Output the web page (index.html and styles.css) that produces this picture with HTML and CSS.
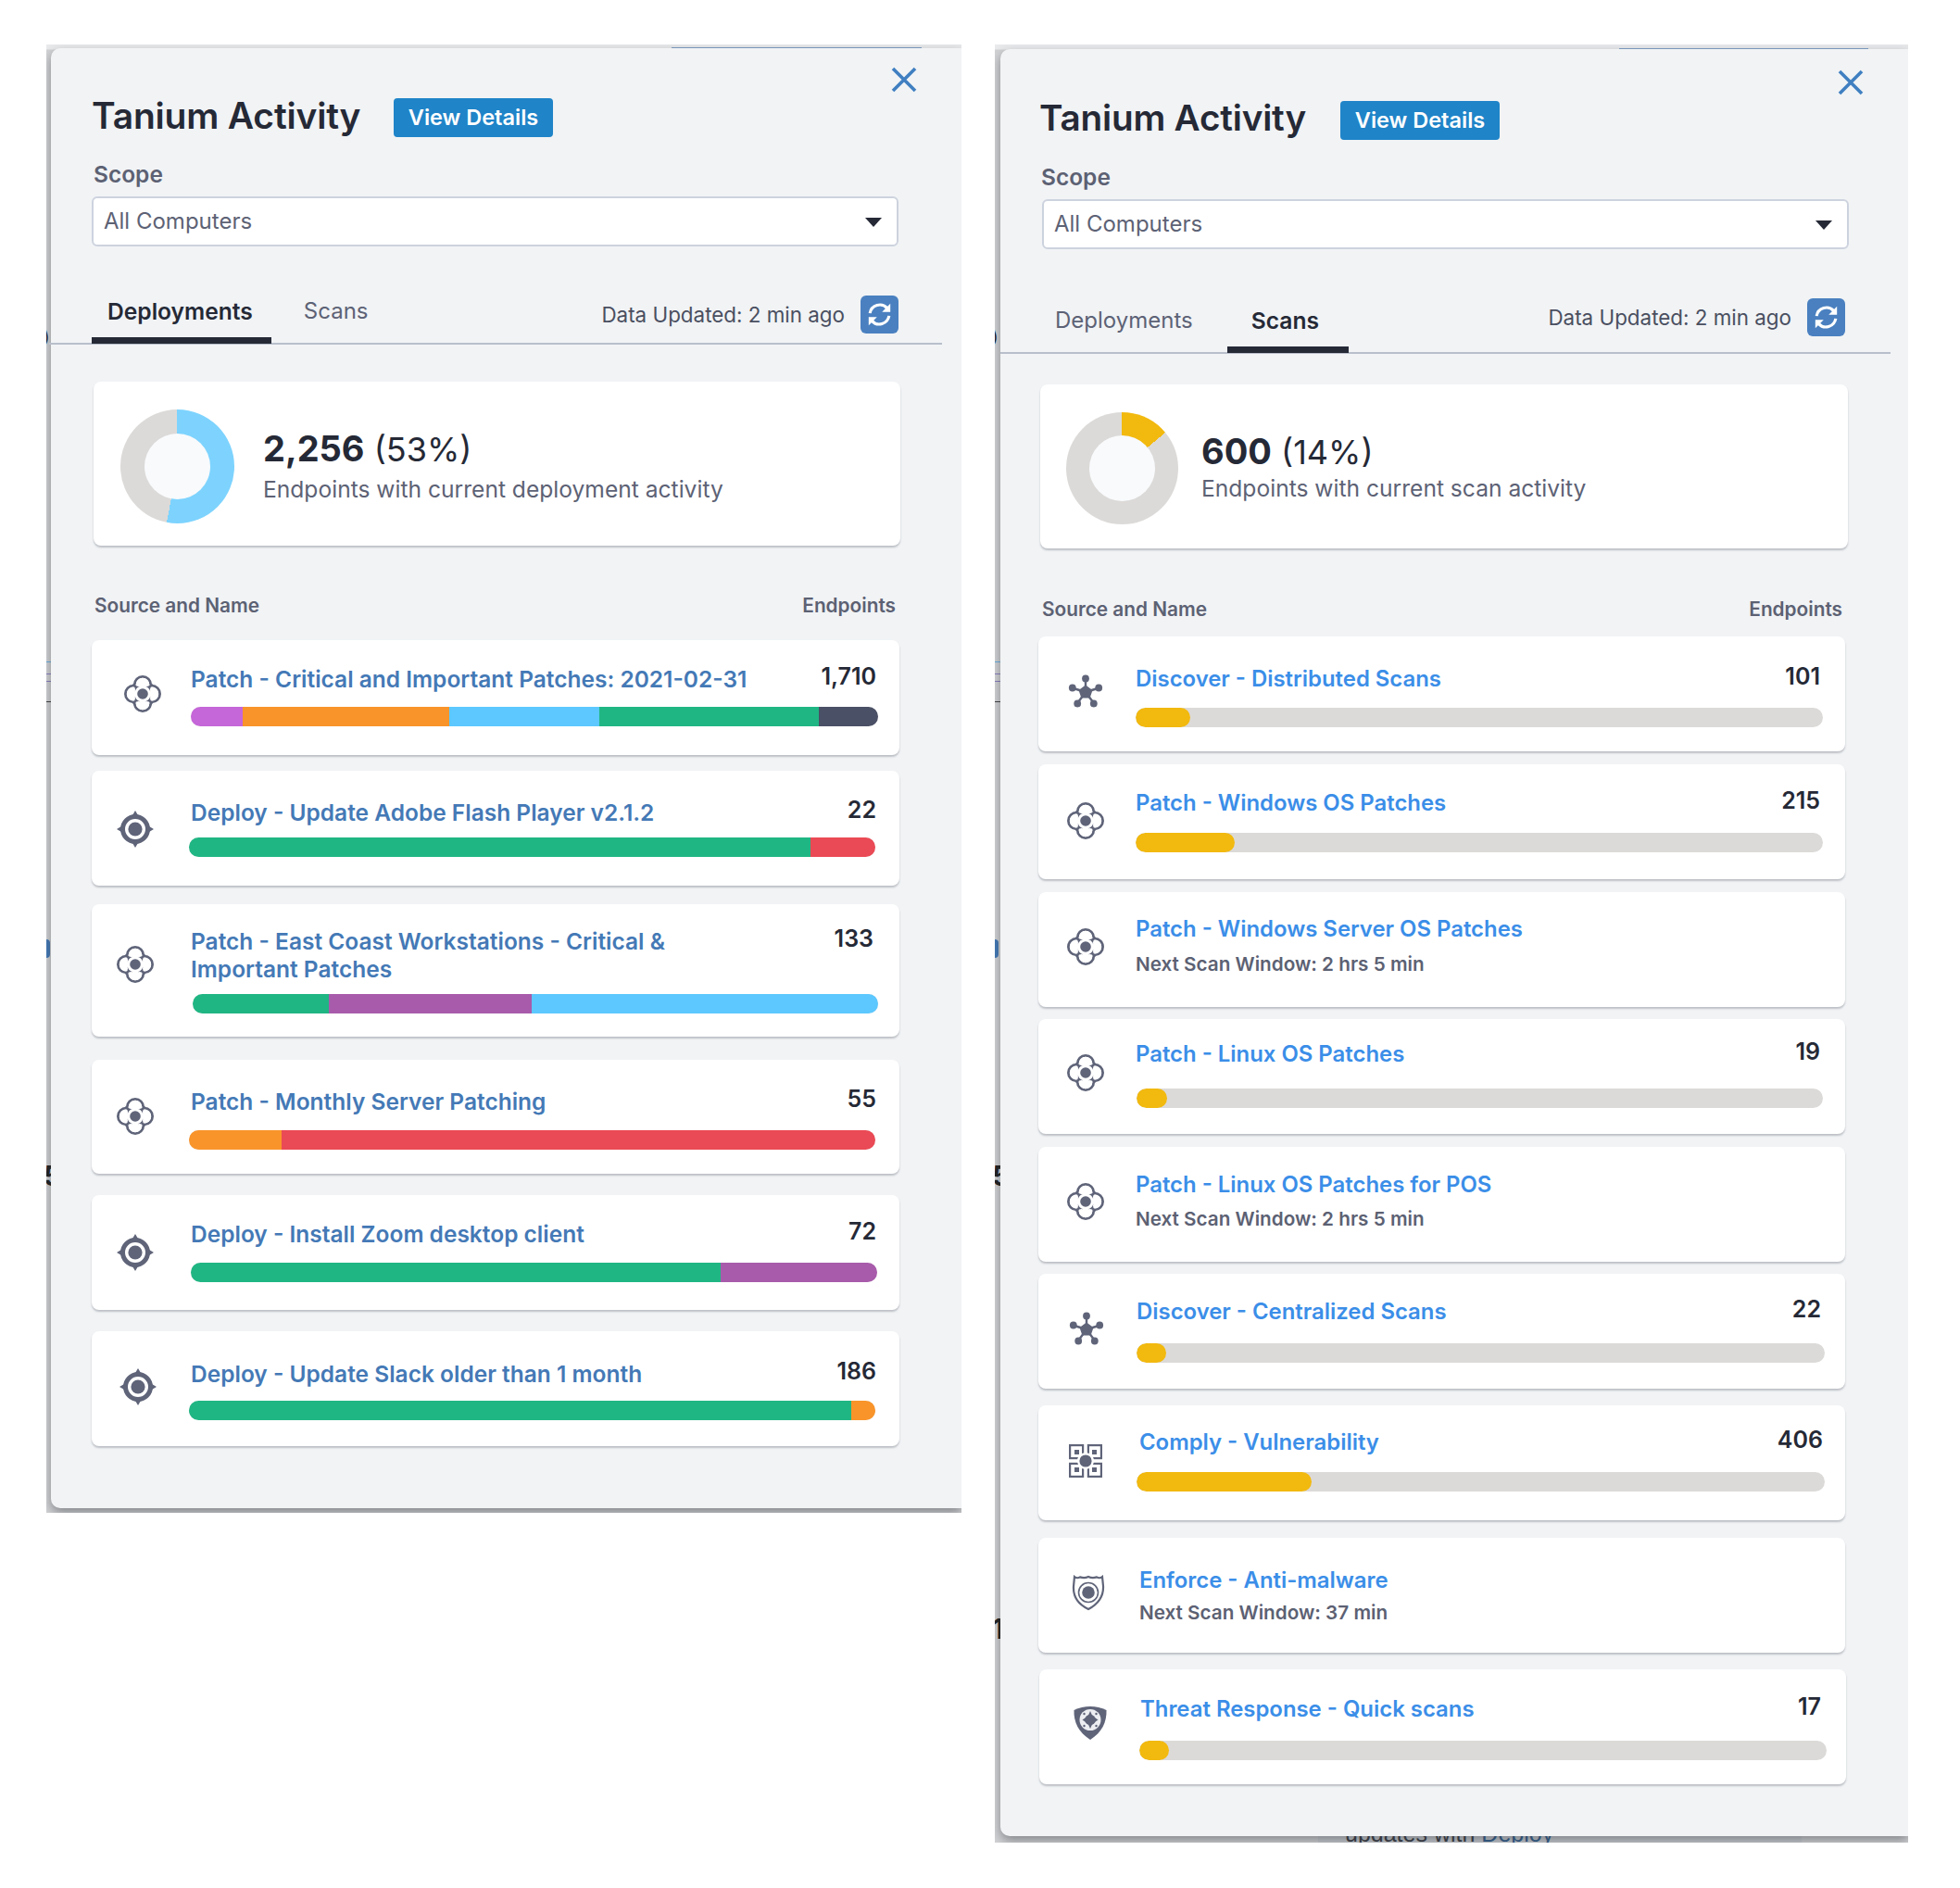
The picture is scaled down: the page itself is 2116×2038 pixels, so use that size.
FILE: index.html
```html
<!DOCTYPE html>
<html lang="en">
<head>
    <meta charset="UTF-8">
    <meta name="viewport" content="width=device-width, initial-scale=1.0">
    <title>Tanium Activity</title>
    <link rel="stylesheet" href="styles.css">
</head>
<body>
<svg class="defs" width="0" height="0">
    <symbol id="i-patch" viewBox="0 0 40 40">
        <g fill="none" stroke="#5f6479" stroke-width="2.800">
            <circle cx="20" cy="10.200" r="8.800"/>
            <circle cx="29.800" cy="20" r="8.800"/>
            <circle cx="20" cy="29.800" r="8.800"/>
            <circle cx="10.200" cy="20" r="8.800"/>
        </g>
        <g fill="#fff">
            <circle cx="20" cy="10.200" r="7.400"/>
            <circle cx="29.800" cy="20" r="7.400"/>
            <circle cx="20" cy="29.800" r="7.400"/>
            <circle cx="10.200" cy="20" r="7.400"/>
        </g>
        <g fill="#5f6479">
            <path d="M8.500 8.500Q13 14 11.700 17.500A8.500 8.500 0 0 1 17.500 11.700Q14 13 8.500 8.500z"/>
            <path transform="rotate(90 20 20)" d="M8.500 8.500Q13 14 11.700 17.500A8.500 8.500 0 0 1 17.500 11.700Q14 13 8.500 8.500z"/>
            <path transform="rotate(180 20 20)" d="M8.500 8.500Q13 14 11.700 17.500A8.500 8.500 0 0 1 17.500 11.700Q14 13 8.500 8.500z"/>
            <path transform="rotate(270 20 20)" d="M8.500 8.500Q13 14 11.700 17.500A8.500 8.500 0 0 1 17.500 11.700Q14 13 8.500 8.500z"/>
        </g>
        <circle cx="20" cy="20" r="5.800" fill="#5f6479"/>
    </symbol>
    <symbol id="i-deploy" viewBox="0 0 40 40">
        <path fill="#5f6479" d="M20 0l3 5h-6zM40 20l-5 3v-6zM20 40l-3-5h6zM0 20l5-3v6z"/>
        <circle cx="20" cy="20" r="13.500" fill="none" stroke="#5f6479" stroke-width="5"/>
        <circle cx="20" cy="20" r="7.600" fill="#5f6479"/>
    </symbol>
    <symbol id="i-discover" viewBox="0 0 40 40">
        <g stroke="#5f6479" stroke-width="2.400">
            <path d="M20 20V5M20 20L35 15.500M20 20l9.500 13M20 20l-9.500 13M20 20L5 15.500"/>
        </g>
        <g fill="#5f6479">
            <path d="M20 12.500l7.500 5.400-2.900 8.600h-9.200l-2.900-8.600z"/>
            <circle cx="20" cy="5.500" r="3.900"/>
            <circle cx="34.200" cy="15.500" r="3.900"/>
            <circle cx="28.800" cy="32.500" r="3.900"/>
            <circle cx="11.200" cy="32.500" r="3.900"/>
            <circle cx="5.800" cy="15.500" r="3.900"/>
        </g>
    </symbol>
    <symbol id="i-comply" viewBox="0 0 36 36">
        <g fill="none" stroke="#5f6479" stroke-width="2.200">
            <rect x="1.100" y="1.100" width="14" height="14"/>
            <rect x="20.900" y="1.100" width="14" height="14"/>
            <rect x="1.100" y="20.900" width="14" height="14"/>
            <rect x="20.900" y="20.900" width="14" height="14"/>
        </g>
        <g fill="#5f6479">
            <rect x="6" y="6" width="5" height="5"/>
            <rect x="25" y="6" width="5" height="5"/>
            <rect x="6" y="25" width="5" height="5"/>
            <rect x="25" y="25" width="5" height="5"/>
        </g>
        <circle cx="18" cy="18" r="9" fill="#fff"/>
        <circle cx="18" cy="18" r="6.600" fill="#5f6479"/>
    </symbol>
    <symbol id="i-enforce" viewBox="0 0 36 40">
        <path fill="none" stroke="#5f6479" stroke-width="2.200" d="M3 2c2 1.600 4 1.600 6 .4 3 1 6 1 9-.4 3 1.400 6 1.400 9 .4 2 1.200 4 1.200 6-.4l1 10c.6 12-6.500 20-16 25C8.500 32.500 1.400 24.500 2 12.500z"/>
        <circle cx="18" cy="19" r="10.500" fill="none" stroke="#5f6479" stroke-width="1.600"/>
        <circle cx="18" cy="19" r="6.800" fill="#5f6479"/>
    </symbol>
    <symbol id="i-threat" viewBox="0 0 36 36">
        <path fill="#5f6479" d="M18 0c6 0 12 1.500 17.500 4 .5 13-5 24-17.500 32C5.500 28 0 17 .5 4 6 1.500 12 0 18 0z"/>
        <circle cx="18" cy="14.500" r="11.500" fill="#eceef1"/>
        <path fill="#5f6479" d="M18 5l2.500 5.500 6 4-6 4-2.500 5.500-2.500-5.500-6-4 6-4z"/>
        <circle cx="18" cy="14.500" r="5.800" fill="#5f6479"/>
        <g fill="#5f6479">
            <circle cx="11.500" cy="8" r="1.200"/>
            <circle cx="24.500" cy="8" r="1.200"/>
            <circle cx="24.500" cy="21" r="1.200"/>
            <circle cx="11.500" cy="21" r="1.200"/>
        </g>
    </symbol>
    <symbol id="i-refresh" viewBox="0 0 24 24">
        <g fill="none" stroke="#fff" stroke-width="2.300">
            <path d="M4.500 11A7.800 7.800 0 0 1 18 7"/>
            <path d="M19.500 13A7.800 7.800 0 0 1 6 17"/>
        </g>
        <path fill="#fff" d="M20.500 3.500v6.500h-6.500zM3.500 20.500v-6.500h6.500z"/>
    </symbol>
    <symbol id="i-close" viewBox="0 0 28 28">
        <path fill="none" stroke="#3f7fc1" stroke-width="3.600" d="M2 2l24 24M26 2L2 26"/>
    </symbol>
</svg>

<div class="page">

    <div class="shot shot-left">
        <span class="edge edge-a">)</span>
        <span class="edge edge-b">5</span>
        <span class="ticks"></span>
        <span class="blip"></span>
        <span class="top-line"></span>
        <section class="panel">
            <a class="close"><svg><use href="#i-close"/></svg></a>
            <div class="head">
                <h1>Tanium Activity</h1>
                <a class="btn">View Details</a>
            </div>
            <label class="scope">Scope</label>
            <div class="select">All Computers</div>
            <div class="tabs">
                <a class="tab active">Deployments</a>
                <a class="tab">Scans</a>
                <div class="updated">
                    <span>Data Updated: 2 min ago</span>
                    <a class="refresh"><svg><use href="#i-refresh"/></svg></a>
                </div>
            </div>
            <div class="summary">
                <div class="donut donut-deploy"></div>
                <div class="summary-text">
                    <div class="stat"><b>2,256</b> (53%)</div>
                    <div class="stat-sub">Endpoints with current deployment activity</div>
                </div>
            </div>
            <div class="list-head"><span>Source and Name</span><span>Endpoints</span></div>
            <div class="list">
                <div class="row">
                    <svg class="icon"><use href="#i-patch"/></svg>
                    <div class="body">
                        <div class="row-top"><a class="name">Patch - Critical and Important Patches: 2021-02-31</a><span class="count">1,710</span></div>
                        <div class="bar">
                            <i class="c-purple" style="width: 7.6%"></i><i class="c-orange" style="width: 30%"></i><i class="c-blue" style="width: 21.9%"></i><i class="c-green" style="width: 31.9%"></i><i class="c-dark" style="width: 8.6%"></i>
                        </div>
                    </div>
                </div>
                <div class="row">
                    <svg class="icon"><use href="#i-deploy"/></svg>
                    <div class="body">
                        <div class="row-top"><a class="name">Deploy - Update Adobe Flash Player v2.1.2</a><span class="count">22</span></div>
                        <div class="bar"><i class="c-green" style="width: 90.5%"></i><i class="c-red" style="width: 9.5%"></i></div>
                    </div>
                </div>
                <div class="row">
                    <svg class="icon"><use href="#i-patch"/></svg>
                    <div class="body">
                        <div class="row-top"><a class="name name-wrap">Patch - East Coast Workstations - Critical &amp; Important Patches</a><span class="count">133</span></div>
                        <div class="bar"><i class="c-green" style="width: 19.9%"></i><i class="c-violet" style="width: 29.6%"></i><i class="c-blue" style="width: 50.5%"></i></div>
                    </div>
                </div>
                <div class="row">
                    <svg class="icon"><use href="#i-patch"/></svg>
                    <div class="body">
                        <div class="row-top"><a class="name">Patch - Monthly Server Patching</a><span class="count">55</span></div>
                        <div class="bar"><i class="c-orange" style="width: 13.5%"></i><i class="c-red" style="width: 86.5%"></i></div>
                    </div>
                </div>
                <div class="row">
                    <svg class="icon"><use href="#i-deploy"/></svg>
                    <div class="body">
                        <div class="row-top"><a class="name">Deploy - Install Zoom desktop client</a><span class="count">72</span></div>
                        <div class="bar"><i class="c-green" style="width: 77.2%"></i><i class="c-violet" style="width: 22.8%"></i></div>
                    </div>
                </div>
                <div class="row">
                    <svg class="icon"><use href="#i-deploy"/></svg>
                    <div class="body">
                        <div class="row-top"><a class="name">Deploy - Update Slack older than 1 month</a><span class="count">186</span></div>
                        <div class="bar"><i class="c-green" style="width: 96.5%"></i><i class="c-orange" style="width: 3.5%"></i></div>
                    </div>
                </div>
            </div>
        </section>
    </div>

    <div class="shot shot-right">
        <span class="edge edge-a">)</span>
        <span class="edge edge-b">5</span>
        <span class="edge edge-c">1</span>
        <span class="ticks"></span>
        <span class="blip"></span>
        <span class="top-line"></span>
        <div class="ghost">updates with <span>Deploy</span></div>
        <section class="panel">
            <a class="close"><svg><use href="#i-close"/></svg></a>
            <div class="head">
                <h1>Tanium Activity</h1>
                <a class="btn">View Details</a>
            </div>
            <label class="scope">Scope</label>
            <div class="select">All Computers</div>
            <div class="tabs">
                <a class="tab">Deployments</a>
                <a class="tab active">Scans</a>
                <div class="updated">
                    <span>Data Updated: 2 min ago</span>
                    <a class="refresh"><svg><use href="#i-refresh"/></svg></a>
                </div>
            </div>
            <div class="summary">
                <div class="donut donut-scan"></div>
                <div class="summary-text">
                    <div class="stat"><b>600</b> (14%)</div>
                    <div class="stat-sub">Endpoints with current scan activity</div>
                </div>
            </div>
            <div class="list-head"><span>Source and Name</span><span>Endpoints</span></div>
            <div class="list">
                <div class="row">
                    <svg class="icon"><use href="#i-discover"/></svg>
                    <div class="body">
                        <div class="row-top"><a class="name">Discover - Distributed Scans</a><span class="count">101</span></div>
                        <div class="bar"><i class="c-yellow" style="width: 7.9%"></i></div>
                    </div>
                </div>
                <div class="row">
                    <svg class="icon"><use href="#i-patch"/></svg>
                    <div class="body">
                        <div class="row-top"><a class="name">Patch - Windows OS Patches</a><span class="count">215</span></div>
                        <div class="bar"><i class="c-yellow" style="width: 14.4%"></i></div>
                    </div>
                </div>
                <div class="row">
                    <svg class="icon"><use href="#i-patch"/></svg>
                    <div class="body">
                        <div class="row-top"><a class="name">Patch - Windows Server OS Patches</a></div>
                        <div class="next">Next Scan Window: 2 hrs 5 min</div>
                    </div>
                </div>
                <div class="row">
                    <svg class="icon"><use href="#i-patch"/></svg>
                    <div class="body">
                        <div class="row-top"><a class="name">Patch - Linux OS Patches</a><span class="count">19</span></div>
                        <div class="bar"><i class="c-yellow" style="width: 4.5%"></i></div>
                    </div>
                </div>
                <div class="row">
                    <svg class="icon"><use href="#i-patch"/></svg>
                    <div class="body">
                        <div class="row-top"><a class="name">Patch - Linux OS Patches for POS</a></div>
                        <div class="next">Next Scan Window: 2 hrs 5 min</div>
                    </div>
                </div>
                <div class="row">
                    <svg class="icon"><use href="#i-discover"/></svg>
                    <div class="body">
                        <div class="row-top"><a class="name">Discover - Centralized Scans</a><span class="count">22</span></div>
                        <div class="bar"><i class="c-yellow" style="width: 4.3%"></i></div>
                    </div>
                </div>
                <div class="row">
                    <svg class="icon icon-sm"><use href="#i-comply"/></svg>
                    <div class="body">
                        <div class="row-top"><a class="name">Comply - Vulnerability</a><span class="count">406</span></div>
                        <div class="bar"><i class="c-yellow" style="width: 25.4%"></i></div>
                    </div>
                </div>
                <div class="row">
                    <svg class="icon icon-tall"><use href="#i-enforce"/></svg>
                    <div class="body">
                        <div class="row-top"><a class="name">Enforce - Anti-malware</a></div>
                        <div class="next">Next Scan Window: 37 min</div>
                    </div>
                </div>
                <div class="row">
                    <svg class="icon icon-sm"><use href="#i-threat"/></svg>
                    <div class="body">
                        <div class="row-top"><a class="name">Threat Response - Quick scans</a><span class="count">17</span></div>
                        <div class="bar"><i class="c-yellow" style="width: 4.3%"></i></div>
                    </div>
                </div>
            </div>
        </section>
    </div>

</div>
</body>
</html>
```

FILE: styles.css
```css
* {
    box-sizing: border-box;
}

body {
    margin: 0;
    background-color: #fff;
    font-family: Inter, "Liberation Sans", sans-serif;
    color: #252936;
}

.defs {
    position: absolute;
}

.page {
    display: flex;
    align-items: flex-start;
    gap: 36px;
    padding: 48px 0 0 50px;
    height: 2038px;
}

/* the two cut-outs, each with a bit of the page behind the panel showing */
.shot {
    position: relative;
    overflow: hidden;
    background: linear-gradient(#e9eaec 5px, #d2d3d5 6px);
}

.shot-left {
    width: 988px;
    height: 1585px;
}

.shot-right {
    width: 986px;
    height: 1941px;
}

.edge {
    position: absolute;
    left: -3px;
    font-size: 30px;
    font-weight: 700;
    color: #222;
}

.edge-a {
    top: 305px;
    font-size: 18px;
    font-weight: 400;
}

.edge-b {
    top: 1203px;
}

.edge-c {
    top: 1692px;
}

.ticks {
    position: absolute;
    left: 0;
    top: 666px;
    width: 7px;
    height: 1px;
    background-color: #6bb0e0;
    box-shadow: 0 13px #8a7fc0, 0 21px #8a7fc0, 0 43px #444;
}

.blip {
    position: absolute;
    left: 0;
    top: 966px;
    width: 4px;
    height: 20px;
    background-color: #4479b6;
    border-radius: 0 4px 4px 0;
}

.top-line {
    position: absolute;
    top: 3px;
    height: 2px;
    background-color: #7f9fc6;
}

.shot-left .top-line {
    left: 675px;
    width: 270px;
}

.shot-right .top-line {
    left: 674px;
    width: 269px;
    top: 4px;
}

.ghost {
    position: absolute;
    left: 349px;
    bottom: -5px;
    width: 522px;
    padding-left: 29px;
    font-family: "Liberation Sans", sans-serif;
    font-size: 25px;
    line-height: 30px;
    background-color: #c9ccd1;
    color: #3c3f47;
}

.ghost span {
    color: #34608f;
}

.panel {
    position: relative;
    background-color: #f1f3f5;
    border-radius: 10px 0 0 10px;
    box-shadow: 0 5px 12px rgba(40, 44, 52, 0.45);
}

.shot-left .panel {
    margin: 4px 0 0 5px;
    height: 1576px;
    padding: 54px 0 0 45px;
}

.shot-right .panel {
    margin: 5px 0 0 6px;
    height: 1929px;
    padding: 56px 0 0 43px;
}

.close {
    position: absolute;
    top: 20px;
    right: 48px;
    width: 28px;
    height: 28px;
}

.shot-right .close {
    top: 22px;
}

.close svg,
.refresh svg {
    display: block;
    width: 100%;
    height: 100%;
}

.head {
    display: flex;
    align-items: center;
    height: 42px;
    margin-bottom: 25px;
}

h1 {
    margin: -6px 38px 0 -1px;
    width: 288px;
    font-size: 39px;
    font-weight: 600;
    letter-spacing: -0.2px;
    white-space: nowrap;
}

.shot-right h1 {
    margin-right: 37px;
    font-size: 38.7px;
}

.btn {
    display: block;
    width: 172px;
    height: 42px;
    line-height: 42px;
    text-align: center;
    background-color: #1f84c8;
    color: #fff;
    font-size: 23.5px;
    font-weight: 600;
    border-radius: 4px;
}

.scope {
    display: block;
    height: 30px;
    padding-left: 1px;
    line-height: 30px;
    font-size: 24.5px;
    font-weight: 600;
    color: #5c6173;
}

.select {
    position: relative;
    width: 871px;
    height: 54px;
    margin-top: 9px;
    padding-left: 11px;
    line-height: 50px;
    font-size: 24px;
    color: #5d6275;
    background-color: #fff;
    border: 2px solid #cdd3de;
    border-radius: 6px;
}

.select::after {
    content: "";
    position: absolute;
    right: 16px;
    top: 21px;
    border-left: 9px solid transparent;
    border-right: 9px solid transparent;
    border-top: 10px solid #252936;
}

.shot-left .select {
    margin-left: -1px;
}

.shot-right .select {
    margin-left: 2px;
}

.tabs {
    display: flex;
    margin-top: 53px;
    border-bottom: 2px solid #b9bfcb;
}

.shot-left .tabs {
    width: 964px;
    height: 53px;
    margin-left: -47px;
    padding-left: 46px;
}

.shot-right .tabs {
    width: 961px;
    height: 60px;
    margin-left: -43px;
}

.tab {
    line-height: 30px;
    font-size: 24px;
    color: #5d6275;
    white-space: nowrap;
}

.tab.active {
    font-size: 24.6px;
    font-weight: 600;
    color: #252936;
    border-bottom: 7px solid #252936;
    margin-bottom: -1px;
}

.shot-left .tab {
    padding: 2px 20px 0 17px;
}

.shot-left .tab + .tab {
    margin-left: 18px;
}

.shot-right .tab {
    padding: 9px 32px 0 26px;
}

.shot-right .tab:first-child {
    padding: 9px 0 0 59px;
}

.shot-right .tab + .tab {
    margin-left: 37px;
}

.updated {
    display: flex;
    align-items: center;
    gap: 17px;
    height: 41px;
    margin-left: auto;
    margin-right: 47px;
    font-size: 22.4px;
    color: #4a4f60;
    white-space: nowrap;
}

.shot-right .updated {
    margin-right: 49px;
}

.refresh {
    width: 41px;
    height: 41px;
    padding: 4px;
    background-color: #4a80c0;
    border-radius: 6px;
}

.summary {
    display: flex;
    width: 871px;
    height: 177px;
    padding: 30px 0 0 29px;
    background-color: #fff;
    border-radius: 8px;
    box-shadow: 0 2px 2px rgba(70, 76, 90, 0.3);
}

.shot-left .summary {
    margin: 40px 0 0 1px;
}

.shot-right .summary {
    width: 872px;
    margin: 33px 0 0 0;
    padding-left: 28px;
}

.donut {
    position: relative;
    flex: none;
    width: 123px;
    height: 123px;
    border-radius: 50%;
}

.donut::after {
    content: "";
    position: absolute;
    top: 26px;
    left: 26px;
    width: 71px;
    height: 71px;
    border-radius: 50%;
    background-color: #f8fafc;
}

.donut-deploy {
    background: conic-gradient(#7dd3fe 0 53%, #dcdad8 53% 100%);
}

.donut-scan {
    width: 121px;
    height: 121px;
    background: conic-gradient(#f2b90f 0 14%, #dcdad8 14% 100%);
}

.donut-scan::after {
    top: 25px;
    left: 25px;
}

.summary-text {
    margin: 22px 0 0 31px;
}

.shot-right .summary-text {
    margin-left: 25px;
}

.stat {
    line-height: 40px;
    font-size: 36px;
}

.stat b {
    font-size: 38px;
    font-weight: 700;
}

.stat-sub {
    margin-top: 8px;
    line-height: 30px;
    font-size: 24.6px;
    color: #5d6275;
}

.shot-right .stat-sub {
    margin-top: 4px;
}

.list-head {
    display: flex;
    justify-content: space-between;
    line-height: 30px;
    font-size: 20.8px;
    font-weight: 600;
    color: #5c6173;
}

.shot-left .list-head {
    width: 865px;
    margin: 50px 0 0 2px;
}

.shot-right .list-head {
    width: 864px;
    margin: 51px 0 0 2px;
}

.list {
    display: flex;
    flex-direction: column;
}

.shot-left .list {
    margin-left: -1px;
}

.shot-right .list {
    margin-left: -2px;
}

.row {
    display: flex;
    flex: none;
    width: 872px;
    height: 124px;
    padding: 0 1px;
    margin-top: var(--mt);
    margin-left: var(--ml, 0);
    background-color: #fff;
    border-radius: 8px;
    box-shadow: 0 2px 2px rgba(70, 76, 90, 0.3);
}

.shot-right .row {
    width: 871px;
    padding: 0;
}

.icon {
    flex: none;
    width: 40px;
    height: 40px;
    margin: var(--iy) 0 0 var(--ix);
}

.icon-sm {
    width: 36px;
    height: 36px;
}

.icon-tall {
    width: 36px;
}

.body {
    flex: 1;
    min-width: 0;
    margin-left: var(--bx);
    padding: var(--pt) 24px 0 0;
}

.shot-right .body {
    padding-right: 25px;
}

.row-top {
    display: flex;
    justify-content: space-between;
    margin-right: var(--cr, 0);
}

.shot-right .row-top {
    margin-right: var(--cr, 2px);
}

.name {
    font-size: 24.5px;
    font-weight: 600;
    line-height: 30px;
    white-space: nowrap;
}

.name-wrap {
    width: 560px;
    white-space: normal;
}

.shot-left .name {
    color: #4479b6;
}

.shot-right .name {
    font-size: 23.9px;
    color: #3b8ee8;
}

.count {
    margin-top: -3px;
    line-height: 30px;
    font-size: 25px;
    font-weight: 600;
    color: #252936;
}

.next {
    margin-top: var(--nm, 8px);
    line-height: 30px;
    font-size: 20.7px;
    font-weight: 600;
    color: #5c6173;
}

.bar {
    display: flex;
    height: 21px;
    margin: var(--gap) var(--br, 0) 0 var(--bl, 0);
    overflow: hidden;
    border-radius: 11px;
    background-color: #dcdad8;
}

.bar i {
    display: block;
    height: 100%;
}

.bar .c-yellow {
    border-radius: 11px;
}

.c-purple { background-color: #c566d9; }
.c-orange { background-color: #f9942a; }
.c-blue { background-color: #5cc8ff; }
.c-green { background-color: #20b684; }
.c-dark { background-color: #4a5065; }
.c-red { background-color: #ea4a55; }
.c-violet { background-color: #a85bab; }
.c-yellow { background-color: #f2b90f; }

/* the rows sit a few pixels differently in each mock, so nudged one by one */
.shot-left .row:nth-child(1) { --mt: 22px; --ix: 34px; --iy: 38px; --bx: 32px; --pt: 27px; --gap: 15px; --br: -2px; }
.shot-left .row:nth-child(2) { --mt: 17px; --ix: 26px; --iy: 43px; --bx: 40px; --pt: 30px; --gap: 12px; --bl: -2px; --br: 1px; }
.shot-left .row:nth-child(3) { --mt: 20px; --ix: 26px; --iy: 45px; --bx: 40px; --pt: 25px; --gap: 12px; --bl: 2px; --br: -2px; --cr: 3px; height: 143px; }
.shot-left .row:nth-child(4) { --mt: 25px; --ix: 26px; --iy: 41px; --bx: 40px; --pt: 30px; --gap: 16px; --bl: -2px; --br: 1px; height: 123px; }
.shot-left .row:nth-child(5) { --mt: 23px; --ix: 26px; --iy: 42px; --bx: 40px; --pt: 27px; --gap: 16px; --br: -1px; }
.shot-left .row:nth-child(6) { --mt: 23px; --ix: 29px; --iy: 40px; --bx: 37px; --pt: 31px; --gap: 14px; --bl: -2px; --br: 1px; }

.shot-right .row:nth-child(1) { --mt: 14px; --ix: 31px; --iy: 40px; --bx: 34px; --pt: 31px; --gap: 16px; --br: -1px; }
.shot-right .row:nth-child(2) { --mt: 14px; --ix: 31px; --iy: 41px; --bx: 34px; --pt: 27px; --gap: 17px; --br: -1px; }
.shot-right .row:nth-child(3) { --mt: 14px; --ix: 31px; --iy: 39px; --bx: 34px; --pt: 25px; }
.shot-right .row:nth-child(4) { --mt: 13px; --ix: 31px; --iy: 38px; --bx: 34px; --pt: 23px; --gap: 22px; --bl: 1px; --br: -1px; }
.shot-right .row:nth-child(5) { --mt: 14px; --ix: 31px; --iy: 39px; --bx: 34px; --pt: 26px; --nm: 7px; }
.shot-right .row:nth-child(6) { --mt: 13px; --ix: 32px; --iy: 40px; --bx: 34px; --pt: 26px; --gap: 19px; --br: -3px; --cr: 1px; }
.shot-right .row:nth-child(7) { --mt: 18px; --ix: 33px; --iy: 42px; --bx: 40px; --pt: 25px; --gap: 17px; --bl: -3px; --br: -3px; --cr: -1px; }
.shot-right .row:nth-child(8) { --mt: 19px; --ix: 36px; --iy: 40px; --bx: 37px; --pt: 31px; --nm: 5px; }
.shot-right .row:nth-child(9) { --mt: 18px; --ml: 1px; --ix: 37px; --iy: 40px; --bx: 36px; --pt: 28px; --gap: 19px; --bl: -1px; --br: -4px; }
```
